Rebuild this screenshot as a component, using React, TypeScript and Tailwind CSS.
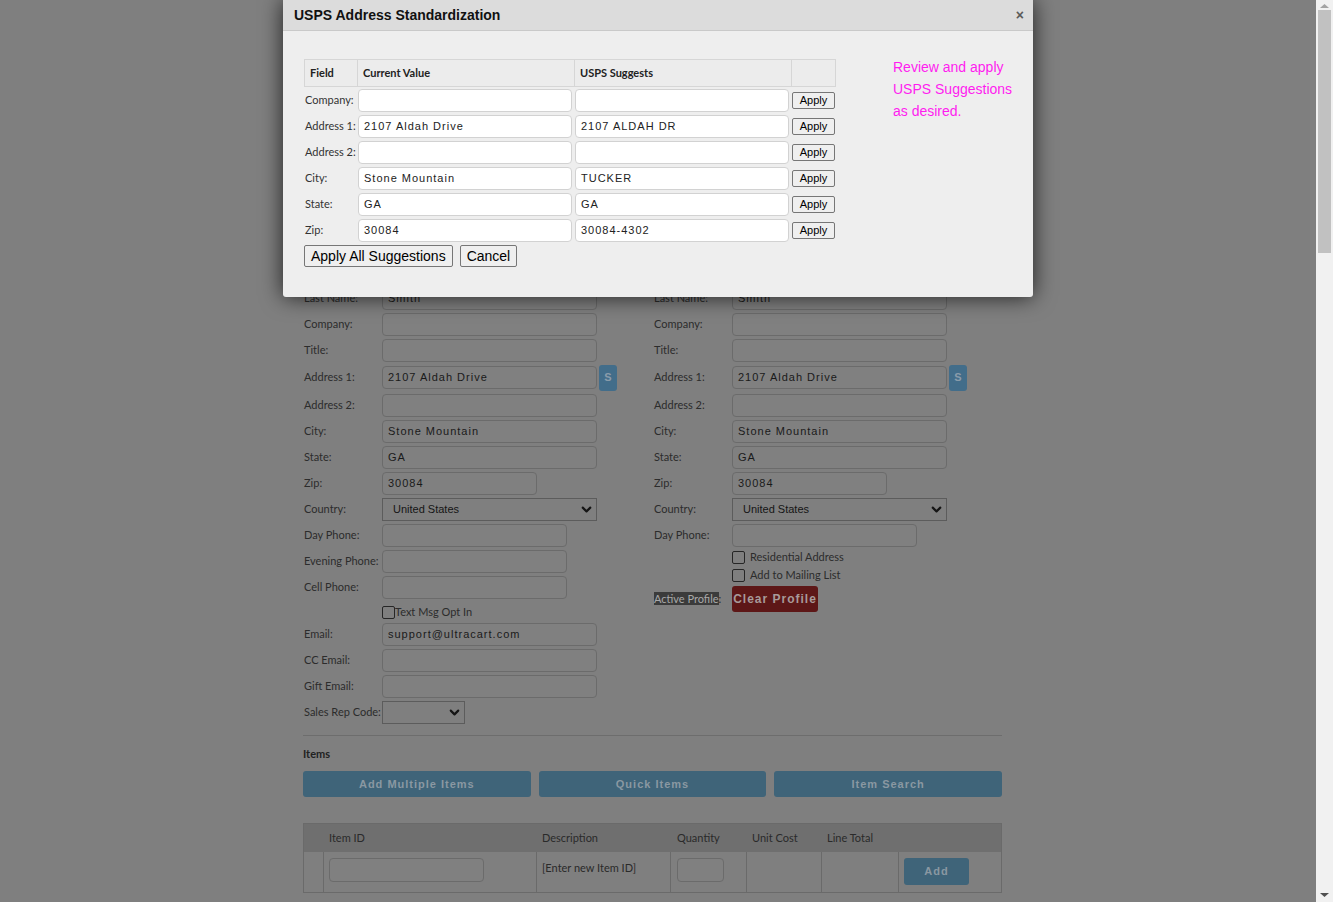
import { ChevronDown } from "lucide-react";

const lato = "font-['Lato',sans-serif]";
const arial = "font-['Liberation_Sans',Arial,sans-serif]";

interface FieldProps {
  label: string;
  value?: string;
  width?: string;
  select?: boolean;
  extra?: React.ReactNode;
  tall?: boolean;
}

// dimmed background form row (sits under the modal overlay)
function Field({ label, value = "", width = "w-[215px]", select, extra, tall }: FieldProps) {
  return (
    <div className={`flex items-center ${tall ? "h-[29px]" : "h-[26px]"}`}>
      <div className={`w-[78px] shrink-0 text-[11px] text-[#2c2c2c] ${lato}`}>{label}</div>
      {select ? (
        <div
          className={`${width} h-[23px] flex items-center justify-between border border-[#5c5c5c] bg-[#7f7f7f] pl-[10px] pr-[2px] text-[11px] text-[#151515] ${arial}`}
        >
          <span>{value}</span>
          <ChevronDown size={15} strokeWidth={3.4} color="#151515" />
        </div>
      ) : (
        <div
          className={`${width} h-[23px] flex items-center rounded-[4px] border border-[#6b6b6b] bg-[#808080] px-[5px] text-[11px] tracking-[1px] text-[#1a1a1a] ${arial}`}
        >
          {value}
        </div>
      )}
      {extra}
    </div>
  );
}

function SButton() {
  return (
    <div
      className={`ml-[2px] w-[18px] h-[26px] rounded-[3px] bg-[#426d8a] flex items-center justify-center text-[11px] font-bold text-[#8a9caa] ${arial}`}
    >
      S
    </div>
  );
}

function Check({ label, gap = "ml-[5px]" }: { label: string; gap?: string }) {
  return (
    <div className="flex items-center h-[18px]">
      <div className="w-[78px] shrink-0" />
      <span className="w-[13px] h-[13px] rounded-[2px] border border-[#262626] bg-[#7f7f7f]" />
      <span className={`${gap} text-[11px] text-[#2c2c2c] ${lato}`}>{label}</span>
    </div>
  );
}

const rows = [
  { label: "Company:", cur: "", usps: "" },
  { label: "Address 1:", cur: "2107 Aldah Drive", usps: "2107 ALDAH DR" },
  { label: "Address 2:", cur: "", usps: "" },
  { label: "City:", cur: "Stone Mountain", usps: "TUCKER" },
  { label: "State:", cur: "GA", usps: "GA" },
  { label: "Zip:", cur: "30084", usps: "30084-4302" },
];

function UspsDialog() {
  const box = `w-[214px] h-[23px] flex items-center rounded-[4px] border border-[#d2d2d2] bg-white px-[5px] text-[11px] tracking-[1px] text-[#222] ${arial}`;
  const btn = `h-[22px] px-[6px] rounded-[2px] border border-[#767676] bg-[#efefef] text-[14px] leading-none text-black ${arial}`;
  return (
    <div className="absolute left-[283px] top-0 w-[750px] h-[297px] bg-[#eeeeee] rounded-b-[3px] shadow-[0_0_22px_rgba(0,0,0,0.75)] flex flex-col">
      <div className="h-[31px] shrink-0 bg-[#dcdcdc] border-b border-[#c9c9c9] flex items-center justify-between pl-[11px] pr-[9px]">
        <span className={`text-[14px] font-bold text-[#111] ${arial}`}>USPS Address Standardization</span>
        <span className={`text-[14px] font-bold text-[#5a5a5a] leading-none ${arial}`}>×</span>
      </div>
      <div className="flex pl-[21px] pt-[28px]">
        <div className="w-[532px]">
          <div className={`grid grid-cols-[52px_217px_217px_44px] h-[28px] border border-[#d6d6d6] bg-[#ececec] text-[11px] font-bold text-[#222] ${lato}`}>
            <div className="flex items-center pl-[5px]">Field</div>
            <div className="flex items-center pl-[5px] border-l border-[#d6d6d6]">Current Value</div>
            <div className="flex items-center pl-[5px] border-l border-[#d6d6d6]">USPS Suggests</div>
            <div className="border-l border-[#d6d6d6]" />
          </div>
          {rows.map((r) => (
            <div key={r.label} className="grid grid-cols-[53px_217px_217px_45px] h-[26px] items-center">
              <div className={`pl-[1px] pt-[1px] text-[11px] text-[#333] ${lato}`}>{r.label}</div>
              <div className="pl-[1px] flex items-center">
                <div className={box}>{r.cur}</div>
              </div>
              <div className="pl-[1px] flex items-center">
                <div className={box}>{r.usps}</div>
              </div>
              <div className="pl-[1px] flex items-center">
                <button className={`w-[43px] h-[17px] rounded-[2px] border border-[#767676] bg-[#efefef] text-[11px] leading-none text-black ${arial}`}>
                  Apply
                </button>
              </div>
            </div>
          ))}
          <div className="flex gap-[7px] mt-[2px]">
            <button className={btn}>Apply All Suggestions</button>
            <button className={btn}>Cancel</button>
          </div>
        </div>
        <div className={`ml-[57px] -mt-[3px] text-[14px] leading-[22px] text-[#ff1cf0] ${arial}`}>
          Review and apply
          <br />
          USPS Suggestions
          <br />
          as desired.
        </div>
      </div>
    </div>
  );
}

function Scrollbar() {
  return (
    <div className="w-[17px] h-full bg-[#f1f1f1] flex flex-col items-center">
      <svg width="9" height="6" viewBox="0 0 9 6" className="mt-[3px]">
        <polygon points="0,5 4.5,1 9,5" fill="#a3a3a3" />
      </svg>
      <div className="mt-[1px] w-[13px] h-[243px] bg-[#c1c1c1]" />
      <div className="flex-1" />
      <svg width="9" height="6" viewBox="0 0 9 6" className="mb-[4px]">
        <polygon points="0,1 4.5,5 9,1" fill="#505050" />
      </svg>
    </div>
  );
}

export default function App() {
  const itemBtn = `h-[26px] rounded-[3px] bg-[#3f6479] flex items-center justify-center text-[11px] font-bold tracking-[1px] text-[#8a98a2] ${arial}`;
  const cols = "grid grid-cols-[19px_213px_134px_76px_75px_77px_1fr]";
  return (
    <div className="flex w-[1333px] h-[902px] overflow-hidden bg-[#7f7f7f]">
      <div className="relative flex-1 h-full">
        <div className="ml-[303px] w-[699px] pt-[259px]">
          <div className="grid grid-cols-[350px_349px] pl-[1px]">
            <div>
              <Field label="First Name:" value="Jane" />
              <Field label="Last Name:" value="Smith" />
              <Field label="Company:" />
              <Field label="Title:" />
              <Field label="Address 1:" value="2107 Aldah Drive" tall extra={<SButton />} />
              <Field label="Address 2:" />
              <Field label="City:" value="Stone Mountain" />
              <Field label="State:" value="GA" />
              <Field label="Zip:" value="30084" width="w-[155px]" />
              <Field label="Country:" value="United States" select />
              <Field label="Day Phone:" width="w-[185px]" />
              <Field label="Evening Phone:" width="w-[185px]" />
              <Field label="Cell Phone:" width="w-[185px]" />
              <div className="h-[21px] flex items-end">
                <Check label="Text Msg Opt In" gap="ml-0" />
              </div>
              <Field label="Email:" value="support@ultracart.com" />
              <Field label="CC Email:" />
              <Field label="Gift Email:" />
              <Field label="Sales Rep Code:" width="w-[83px]" select />
            </div>
            <div>
              <Field label="First Name:" value="Jane" />
              <Field label="Last Name:" value="Smith" />
              <Field label="Company:" />
              <Field label="Title:" />
              <Field label="Address 1:" value="2107 Aldah Drive" tall extra={<SButton />} />
              <Field label="Address 2:" />
              <Field label="City:" value="Stone Mountain" />
              <Field label="State:" value="GA" />
              <Field label="Zip:" value="30084" width="w-[155px]" />
              <Field label="Country:" value="United States" select />
              <Field label="Day Phone:" width="w-[185px]" />
              <Check label="Residential Address" />
              <Check label="Add to Mailing List" />
              <div className="flex items-center h-[30px]">
                <div className={`w-[78px] shrink-0 text-[11px] text-[#2c2c2c] ${lato}`}>
                  <span className="bg-[#3b3b3b] text-[#a9a9a9]">Active Profile</span>:
                </div>
                <div className={`w-[86px] h-[26px] rounded-[3px] bg-[#5d1717] flex items-center justify-center text-[12px] font-bold tracking-[1px] text-[#a89a9a] ${arial}`}>
                  Clear Profile
                </div>
              </div>
            </div>
          </div>

          <div className="mt-[10px] border-t border-[#6d6d6d]" />
          <div className={`pt-[11px] text-[11px] font-bold leading-[14px] text-[#222] ${lato}`}>Items</div>
          <div className="mt-[10px] grid grid-cols-3 gap-[8px]">
            <div className={itemBtn}>Add Multiple Items</div>
            <div className={itemBtn}>Quick Items</div>
            <div className={itemBtn}>Item Search</div>
          </div>

          <div className={`mt-[26px] border border-[#6a6a6a] text-[11px] text-[#2a2a2a] ${lato}`}>
            <div className={`${cols} h-[28px] bg-[#6f6f6f] items-center`}>
              <div />
              <div className="pl-[6px]">Item ID</div>
              <div className="pl-[6px]">Description</div>
              <div className="pl-[7px]">Quantity</div>
              <div className="pl-[6px]">Unit Cost</div>
              <div className="pl-[6px]">Line Total</div>
              <div />
            </div>
            <div className={`${cols} h-[40px]`}>
              <div />
              <div className="border-l border-[#6a6a6a] pl-[5px] pt-[6px]">
                <div className="w-[155px] h-[24px] rounded-[4px] border border-[#6b6b6b] bg-[#808080]" />
              </div>
              <div className="border-l border-[#6a6a6a] pl-[5px] pt-[8px]">[Enter new Item ID]</div>
              <div className="border-l border-[#6a6a6a] pl-[6px] pt-[6px]">
                <div className="w-[47px] h-[24px] rounded-[4px] border border-[#6b6b6b] bg-[#808080]" />
              </div>
              <div className="border-l border-[#6a6a6a]" />
              <div className="border-l border-[#6a6a6a]" />
              <div className="border-l border-[#6a6a6a] pl-[5px] pt-[6px]">
                <div className={`w-[65px] h-[27px] rounded-[3px] bg-[#3f6479] flex items-center justify-center text-[11px] font-bold tracking-[1px] text-[#8a98a2] ${arial}`}>
                  Add
                </div>
              </div>
            </div>
          </div>
        </div>

        <UspsDialog />
      </div>
      <Scrollbar />
    </div>
  );
}
